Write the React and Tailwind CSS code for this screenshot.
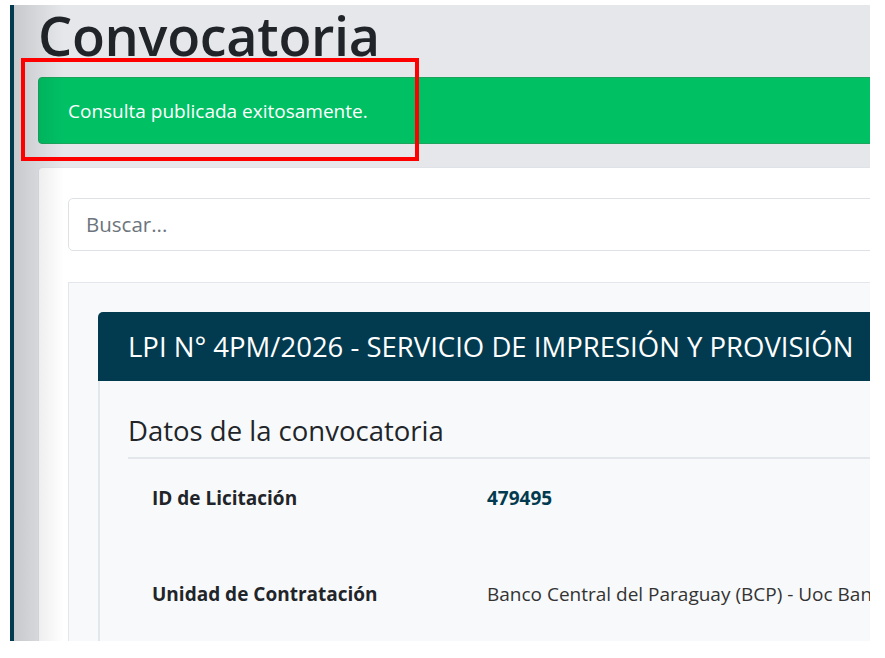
export default function App() {
  return (
    <div className="relative w-[885px] h-[658px] bg-white overflow-hidden font-['Open_Sans',sans-serif]">
      <div className="relative ml-[10px] mt-[5px] w-[860px] h-[636px] overflow-hidden border-l-4 border-[#023b4f] bg-[#e5e7eb]">
        <div className="w-[1150px] pl-[24px]">
          <h1 className="h-[72px] text-[54px] leading-[60px] font-semibold text-[#212529] tracking-[-0.3px]">
            Convocatoria
          </h1>
          <div className="rounded-[4px] border border-[#1ea45c] bg-[#00c064] h-[67px] flex items-center pl-[29px] pt-[1px] text-[19px] text-white">
            Consulta publicada exitosamente.
          </div>
          <div className="mt-[23px] rounded-[4px] border border-[#dfe2e6] bg-white pt-[30px] px-[29px] pb-[29px]">
            <div className="h-[53px] rounded-[5px] border border-[#dee2e6] bg-white flex items-center pl-[17px] text-[20.5px] text-[#6c757d]">
              Buscar...
            </div>
            <div className="mt-[31px] border border-[#e3e6ea] bg-[#f8f9fa] p-[29px]">
              <div className="h-[69px] rounded-t-[5px] bg-[#023b4f] flex items-center pl-[30px] text-[27.5px] text-white whitespace-nowrap">
                LPI N° 4PM/2026 - SERVICIO DE IMPRESIÓN Y PROVISIÓN
              </div>
              <div className="border-l-2 border-[#e3e6ea] px-[28px] pt-[31px] pb-[40px]">
                <h2 className="text-[27.5px] leading-[38px] text-[#212529] pb-[7px] border-b-2 border-[#e3e6ea]">
                  Datos de la convocatoria
                </h2>
                <div className="grid grid-cols-[335px_1fr] pl-[24px] text-[19px] leading-[28px] text-[#212529]">
                  <div className="h-[96px] pt-[25px] font-bold">ID de Licitación</div>
                  <div className="h-[96px] pt-[25px] font-bold text-[#023b4f]">479495</div>
                  <div className="h-[96px] pt-[25px] font-bold">Unidad de Contratación</div>
                  <div className="h-[96px] pt-[25px] text-[#333] whitespace-nowrap">
                    Banco Central del Paraguay (BCP) - Uoc Banco Central del Paraguay
                  </div>
                </div>
              </div>
            </div>
          </div>
        </div>
        <div className="pointer-events-none absolute left-0 top-0 h-full w-[50px] bg-gradient-to-r from-[rgba(0,0,0,0.13)] to-transparent" />
      </div>
      <div className="pointer-events-none absolute left-[21px] top-[58px] w-[398px] h-[103px] border-4 border-[#ff0000]" />
    </div>
  );
}
